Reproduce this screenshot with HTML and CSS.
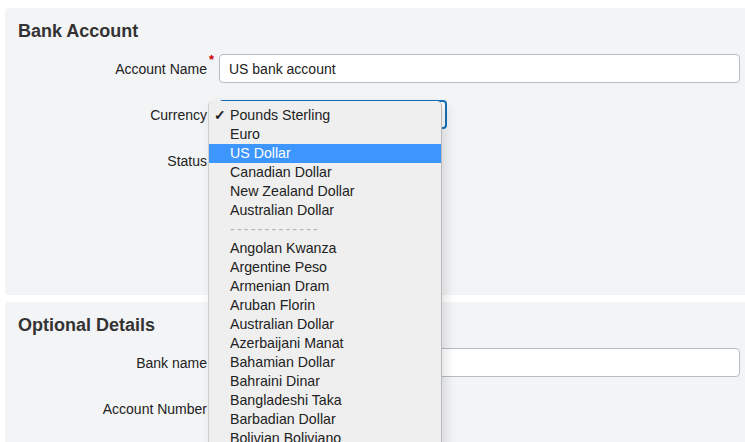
FILE: index.html
```html
<!DOCTYPE html>
<html>
<head>
  <link rel="stylesheet" href="styles.css">
</head>
<body>

<div class="panel panel-main">
  <h2>Bank Account</h2>

  <div class="row">
    <label class="field-label required" for="account-name">Account Name</label>
    <input type="text" id="account-name" class="text-input" value="US bank account">
  </div>

  <div class="row">
    <label class="field-label">Currency</label>
    <div class="select-box">
      <!-- open currency list -->
      <ul class="dropdown">
        <li class="selected">Pounds Sterling</li>
        <li>Euro</li>
        <li class="active">US Dollar</li>
        <li>Canadian Dollar</li>
        <li>New Zealand Dollar</li>
        <li>Australian Dollar</li>
        <li class="divider">-------------</li>
        <li>Angolan Kwanza</li>
        <li>Argentine Peso</li>
        <li>Armenian Dram</li>
        <li>Aruban Florin</li>
        <li>Australian Dollar</li>
        <li>Azerbaijani Manat</li>
        <li>Bahamian Dollar</li>
        <li>Bahraini Dinar</li>
        <li>Bangladeshi Taka</li>
        <li>Barbadian Dollar</li>
        <li>Bolivian Boliviano</li>
      </ul>
    </div>
  </div>

  <div class="row">
    <label class="field-label">Status</label>
  </div>
</div>

<div class="panel panel-last">
  <h2>Optional Details</h2>

  <div class="row">
    <label class="field-label" for="bank-name">Bank name</label>
    <input type="text" id="bank-name" class="text-input">
  </div>

  <div class="row">
    <label class="field-label">Account Number</label>
  </div>
</div>

</body>
</html>
```

FILE: styles.css
```css
body {
  margin: 8px 0 0 5px;
  font-family: "Liberation Sans", Arial, sans-serif;
  color: #222;
  background: #fff;
  overflow: hidden;
  height: 434px;
}

/* Grey form sections */
.panel {
  background: #f3f4f6;
  border-radius: 4px 0 0 4px;
  padding: 12px 5px 12px 13px;
  margin-bottom: 7px;
}
.panel-main {
  padding-bottom: 120px;
}
.panel-last {
  padding-bottom: 40px;
}

h2 {
  margin: 0 0 12px;
  font-size: 18px;
  line-height: 22px;
  font-weight: bold;
  color: #333;
}

/* Label + field rows */
.row {
  display: grid;
  grid-template-columns: 189px 1fr;
  column-gap: 12px;
  align-items: center;
  height: 29px;
  margin-bottom: 17px;
}
.row:last-child {
  margin-bottom: 0;
}
.field-label {
  text-align: right;
  font-size: 14px;
  color: #222;
  position: relative;
}
.required::after {
  content: "*";
  position: absolute;
  right: -7px;
  top: -9px;
  color: #c00;
  font-size: 13px;
  font-weight: bold;
}

.text-input {
  height: 29px;
  box-sizing: border-box;
  border: 1px solid #b6bdc5;
  border-radius: 4px;
  background: #fff;
  padding: 0 9px;
  font-family: inherit;
  font-size: 14px;
  color: #222;
  width: 100%;
}

/* Focused select behind the open list */
.select-box {
  position: relative;
  width: 228px;
  height: 29px;
  box-sizing: border-box;
  border: 2px solid #1670b8;
  border-radius: 4px;
  background: #fff;
}

.dropdown {
  position: absolute;
  left: -13px;
  top: -1px;
  width: 234px;
  margin: 0;
  padding: 5px 0;
  list-style: none;
  background: #efefef;
  border-left: 1px solid #cfcfcf;
  border-right: 1px solid #b9b9b9;
  border-radius: 5px 5px 0 0;
  box-sizing: border-box;
  box-shadow: 4px 4px 12px rgba(0, 0, 0, 0.12);
  z-index: 2;
}
.dropdown li {
  height: 19px;
  line-height: 19px;
  padding-left: 21px;
  font-size: 14.2px;
  color: #222;
  white-space: nowrap;
}
.dropdown li.selected {
  position: relative;
}
.dropdown li.selected::before {
  content: "\2713";
  position: absolute;
  left: 5px;
  font-size: 14px;
  font-weight: bold;
}
.dropdown li.active {
  background: #3d96fd;
  color: #fff;
}
.dropdown li.divider {
  color: #b4b4b4;
  letter-spacing: 2.2px;
}
```
